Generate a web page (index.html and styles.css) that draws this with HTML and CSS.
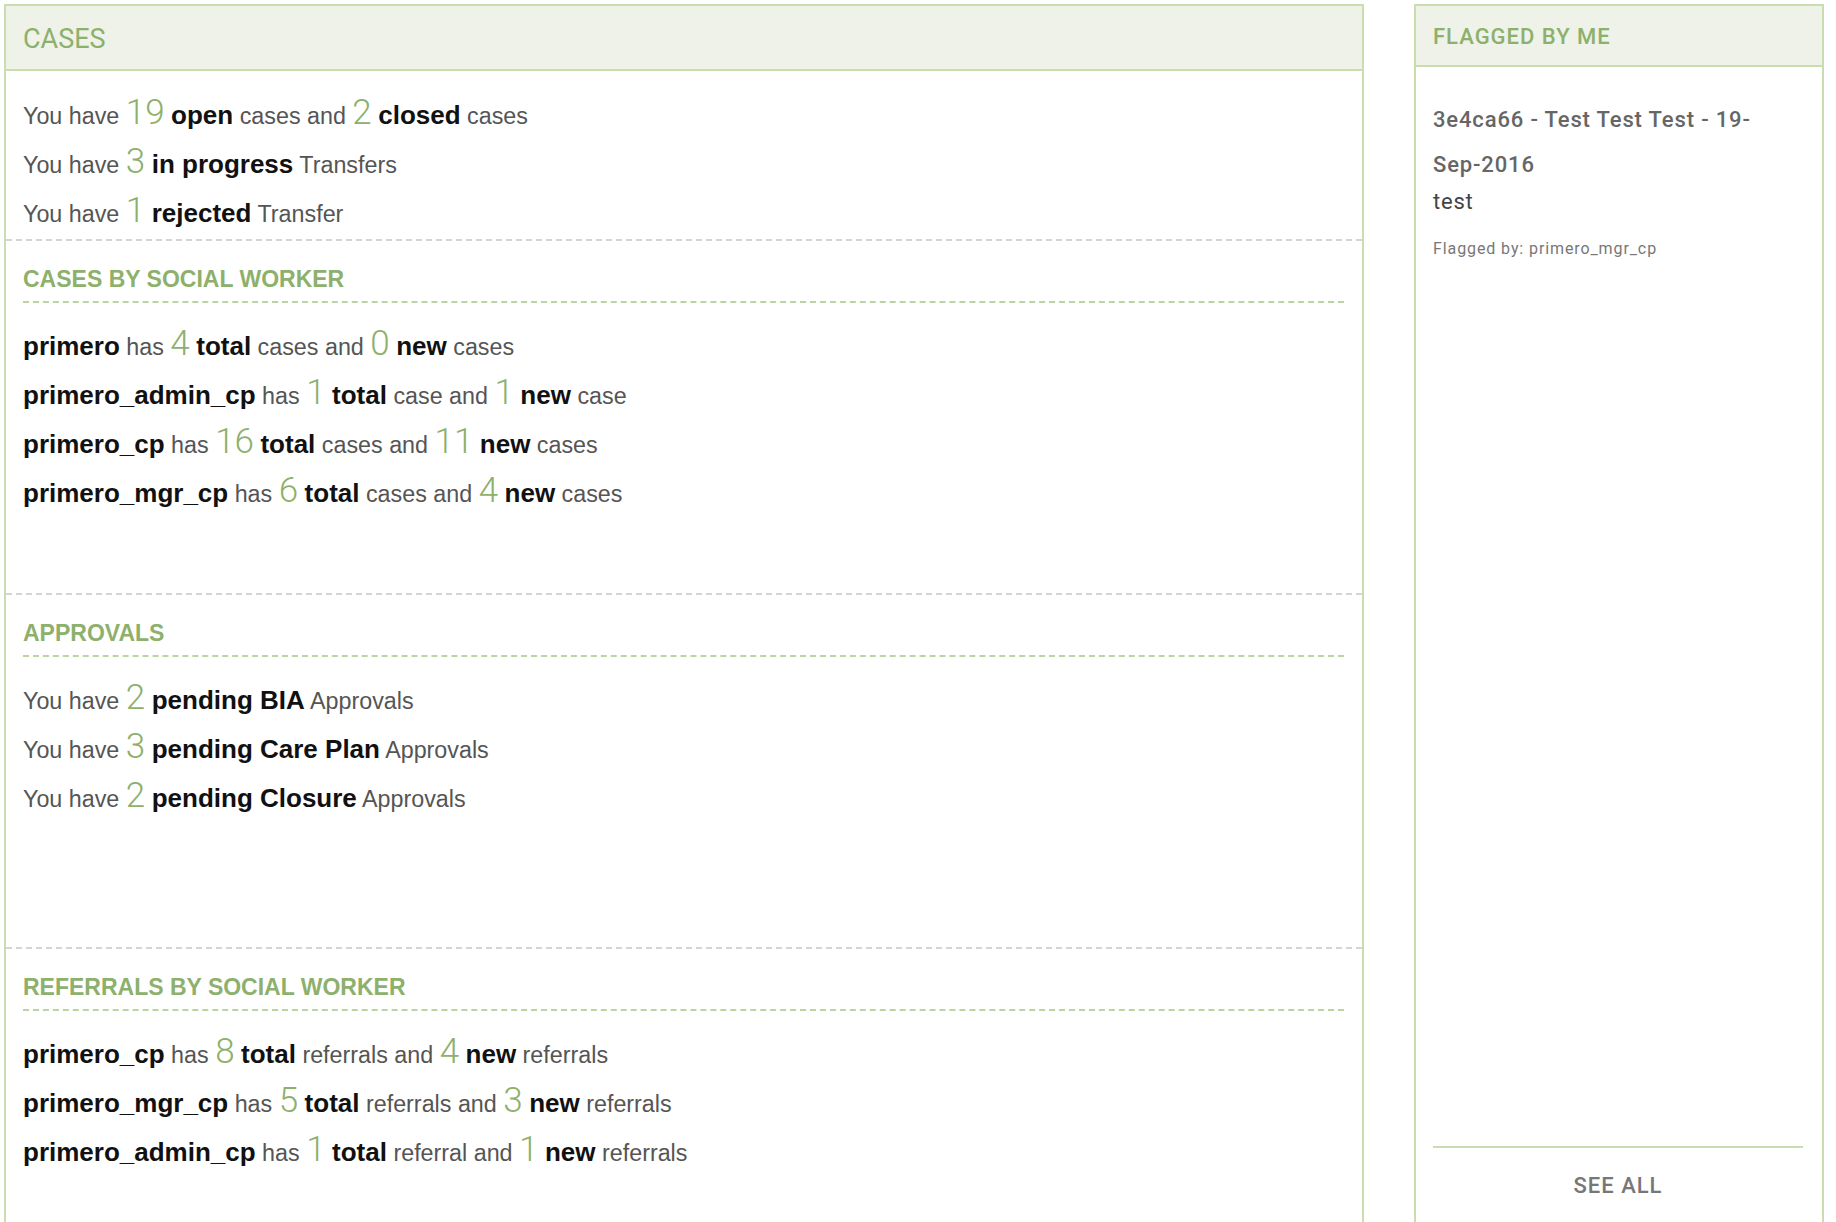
FILE: index.html
```html
<!DOCTYPE html>
<html lang="en">
<head>
<meta charset="utf-8">
<title>Dashboard</title>
<link rel="stylesheet" href="styles.css">
</head>
<body>
<div class="dashboard">
  <section class="panel panel-cases">
    <header class="panel-header"><h2 class="panel-title">CASES</h2></header>
    <div class="summary">
      <p class="row">You have <span class="num">19</span> <b>open</b> cases and <span class="num">2</span> <b>closed</b> cases</p>
      <p class="row">You have <span class="num">3</span> <b>in progress</b> Transfers</p>
      <p class="row">You have <span class="num">1</span> <b>rejected</b> Transfer</p>
    </div>
    <div class="section">
      <h3 class="section-title">CASES BY SOCIAL WORKER</h3>
      <div class="rows">
        <p class="row"><b>primero</b> has <span class="num">4</span> <b>total</b> cases and <span class="num">0</span> <b>new</b> cases</p>
        <p class="row"><b>primero_admin_cp</b> has <span class="num">1</span> <b>total</b> case and <span class="num">1</span> <b>new</b> case</p>
        <p class="row"><b>primero_cp</b> has <span class="num">16</span> <b>total</b> cases and <span class="num">11</span> <b>new</b> cases</p>
        <p class="row"><b>primero_mgr_cp</b> has <span class="num">6</span> <b>total</b> cases and <span class="num">4</span> <b>new</b> cases</p>
      </div>
    </div>
    <div class="section">
      <h3 class="section-title">APPROVALS</h3>
      <div class="rows">
        <p class="row">You have <span class="num">2</span> <b>pending BIA</b> Approvals</p>
        <p class="row">You have <span class="num">3</span> <b>pending Care Plan</b> Approvals</p>
        <p class="row">You have <span class="num">2</span> <b>pending Closure</b> Approvals</p>
      </div>
    </div>
    <div class="section">
      <h3 class="section-title">REFERRALS BY SOCIAL WORKER</h3>
      <div class="rows">
        <p class="row"><b>primero_cp</b> has <span class="num">8</span> <b>total</b> referrals and <span class="num">4</span> <b>new</b> referrals</p>
        <p class="row"><b>primero_mgr_cp</b> has <span class="num">5</span> <b>total</b> referrals and <span class="num">3</span> <b>new</b> referrals</p>
        <p class="row"><b>primero_admin_cp</b> has <span class="num">1</span> <b>total</b> referral and <span class="num">1</span> <b>new</b> referrals</p>
      </div>
    </div>
  </section>

  <aside class="panel panel-flagged">
    <header class="panel-header flagged-header"><h2 class="flagged-title">FLAGGED BY ME</h2></header>
    <div class="flag-list">
      <div class="flag-item">
        <p class="flag-name">3e4ca66 - Test Test Test - 19-<span class="nowrap">Sep-2016</span></p>
        <p class="flag-message">test</p>
        <p class="flag-by">Flagged by: primero_mgr_cp</p>
      </div>
    </div>
    <footer class="flag-footer"><a class="see-all" href="#">SEE ALL</a></footer>
  </aside>
</div>
</body>
</html>
```

FILE: styles.css
```css
html, body {
  margin: 0;
  padding: 0;
  overflow: hidden;
  background: #ffffff;
  height: 1222px;
}

.dashboard {
  display: flex;
  align-items: flex-start;
  gap: 50px;
  padding: 4px 12px 0 4px;
}

.panel {
  border: 2px solid #c9ddae;
  border-bottom: none;
  background: #fff;
  box-sizing: border-box;
}

.panel-cases {
  flex: 0 0 1360px;
  height: 1320px;
}

.panel-flagged {
  flex: 0 0 410px;
  height: 1233px;
  display: flex;
  flex-direction: column;
}

.panel-header {
  background: #eef2e8;
  border-bottom: 2px solid #c9ddae;
  height: 65px;
  box-sizing: border-box;
  display: flex;
  align-items: center;
  padding: 0 17px;
}

.panel-title {
  margin: 0;
  font-family: Roboto, "Liberation Sans", sans-serif;
  font-weight: 400;
  font-size: 27px;
  color: #8db06c;
  padding-top: 2px;
}

.flagged-header {
  height: 61px;
}

.flagged-title {
  margin: 0;
  font-family: Roboto, "Liberation Sans", sans-serif;
  font-weight: 500;
  font-size: 22px;
  letter-spacing: 1px;
  color: #8db06c;
  padding-top: 2px;
}

.row {
  margin: 0;
  font-family: "Liberation Sans", Arial, sans-serif;
  font-size: 23.3px;
  line-height: 49px;
  height: 49px;
  color: #555;
  white-space: nowrap;
}

.row b {
  color: #111;
  font-weight: 700;
  font-size: 26px;
  line-height: 1;
}

.num {
  font-family: Roboto, "Liberation Sans", sans-serif;
  font-weight: 300;
  font-size: 35px;
  line-height: 1;
  color: #8db06c;
}

.summary {
  padding: 21px 17px 0;
  height: 168px;
  box-sizing: border-box;
}

.section {
  border-top: 2px dashed #d4d4d4;
  height: 354px;
  box-sizing: border-box;
  padding: 0 18px 0 17px;
}

.section-title {
  margin: 0;
  padding: 23px 0 7px;
  font-family: "Liberation Sans", Arial, sans-serif;
  font-weight: 700;
  font-size: 23px;
  line-height: 30px;
  color: #8db06c;
  border-bottom: 2px dashed #bcd4a0;
}

.rows {
  padding-top: 20px;
}

.flag-list {
  flex: 1 1 auto;
  padding: 30px 17px 0;
}

.flag-item p {
  margin: 0;
}

.nowrap {
  white-space: nowrap;
}

.flag-name {
  font-family: Roboto, "Liberation Sans", sans-serif;
  font-weight: 500;
  font-size: 22px;
  letter-spacing: 0.85px;
  line-height: 45px;
  color: #666;
}

.flag-message {
  font-family: Roboto, "Liberation Sans", sans-serif;
  font-size: 22px;
  letter-spacing: 0.8px;
  line-height: 30px;
  color: #444;
}

.flag-by {
  padding-top: 22px;
  font-family: Roboto, "Liberation Sans", sans-serif;
  font-size: 16px;
  letter-spacing: 0.9px;
  line-height: 20px;
  color: #777;
}

.flag-footer {
  margin: 0 19px 0 17px;
  border-top: 2px solid #c9ddae;
  padding: 25px 0 38px;
  text-align: center;
}

.see-all {
  font-family: Roboto, "Liberation Sans", sans-serif;
  font-weight: 500;
  font-size: 22px;
  letter-spacing: 1px;
  line-height: 26px;
  color: #777;
  text-decoration: none;
}
```
